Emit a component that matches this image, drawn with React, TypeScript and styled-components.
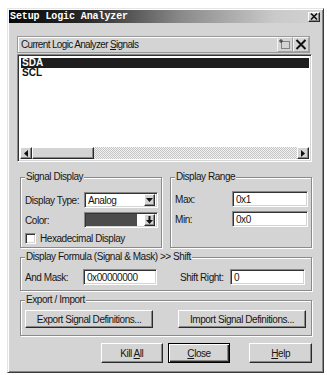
import styled, { createGlobalStyle, css } from 'styled-components';

const FACE = '#d4d4d4';
const UI_FONT = '"Liberation Sans", Arial, sans-serif';

const GlobalStyle = createGlobalStyle`
  html, body {
    margin: 0;
    padding: 0;
    background: #fff;
  }
  body {
    font-family: ${UI_FONT};
    font-size: 10px;
    letter-spacing: -0.45px;
    color: #161616;
  }
`;

const raised = css`
  background: ${FACE};
  border: 1px solid;
  border-color: #fff #2a2a2a #2a2a2a #fff;
  box-shadow: inset -1px -1px #888;
  box-sizing: border-box;
`;

const sunken = css`
  background: #fff;
  border: 1px solid;
  border-color: #888 #fff #fff #888;
  box-shadow: inset 1px 1px #333, inset -1px -1px ${FACE};
  box-sizing: border-box;
`;

const Page = styled.div`
  width: 327px;
  height: 375px;
  box-sizing: border-box;
  padding: 8px 0 0 7px;
`;

const Dialog = styled.div`
  width: 317px;
  height: 365px;
  box-sizing: border-box;
  padding: 1px;
  background: ${FACE};
  border: 1px solid;
  border-color: #e4e4e4 #3a3a3a #3a3a3a #e4e4e4;
  box-shadow: inset 1px 1px #fff, inset -1px -1px #888;
  display: flex;
  flex-direction: column;
`;

const TitleBar = styled.div`
  height: 13px;
  display: flex;
  align-items: center;
  justify-content: space-between;
  padding: 0 2px 0 1px;
  background: linear-gradient(90deg, #080808 0%, #2a2a2a 25%, #8a8a8a 55%, #cacaca 85%, #d2d2d2 100%);
`;

const Title = styled.span`
  font-family: "Liberation Mono", "DejaVu Sans Mono", monospace;
  font-weight: bold;
  font-size: 10px;
  color: #fff;
  letter-spacing: -0.1px;
`;

const CaptionButton = styled.span`
  ${raised};
  width: 12px;
  height: 10px;
  display: flex;
  align-items: center;
  justify-content: center;
`;

const Body = styled.div`
  flex: 1;
  display: flex;
  flex-direction: column;
  padding: 13px 10px 0 8px;
`;

const SignalsHeader = styled.div`
  height: 17px;
  margin-right: 2px;
  box-sizing: border-box;
  display: flex;
  align-items: center;
  padding-left: 3px;
  border: 1px solid #9a9a9a;
  box-shadow: inset 1px 1px #fff;
`;

const HeaderLabel = styled.span`
  flex: 1;
  letter-spacing: -0.65px;
`;

const ToolButton = styled.span`
  width: 16px;
  height: 15px;
  box-sizing: border-box;
  display: flex;
  align-items: center;
  justify-content: center;
  border: 1px solid;
  border-color: #f4f4f4 #a0a0a0 #a0a0a0 #f4f4f4;
`;

const Key = styled.span`
  text-decoration: underline;
`;

const SignalList = styled.div`
  ${sunken};
  margin-top: 1px;
  height: 108px;
  padding: 2px;
  display: flex;
  flex-direction: column;
`;

const Rows = styled.div`
  flex: 1;
  padding: 1px 0 0 1px;
`;

const Row = styled.div<{ $selected?: boolean }>`
  height: 10px;
  line-height: 10px;
  padding-left: 1px;
  font-weight: bold;
  font-size: 10px;
  letter-spacing: 0;
  background: ${(p) => (p.$selected ? '#1e1e1e' : 'transparent')};
  color: ${(p) => (p.$selected ? '#fff' : '#111')};
`;

const HScroll = styled.div`
  height: 12px;
  display: flex;
`;

const ArrowButton = styled.span`
  ${raised};
  width: 12px;
  height: 12px;
  display: flex;
  align-items: center;
  justify-content: center;
`;

const Thumb = styled.span`
  ${raised};
  width: 62px;
  height: 12px;
`;

const Track = styled.span`
  flex: 1;
  background-color: #fff;
  background-image: repeating-conic-gradient(#c4c4c4 0 25%, #f2f2f2 0 50%);
  background-size: 2px 2px;
`;

const GroupRow = styled.div`
  display: grid;
  grid-template-columns: 1fr 1fr;
  gap: 8px;
  margin: 9px 0 0 3px;
`;

const Group = styled.fieldset<{ $height: number; $top?: number }>`
  margin: ${(p) => p.$top ?? 0}px 0 0 0;
  padding: 0 3px 0 4px;
  min-width: 0;
  height: ${(p) => p.$height}px;
  box-sizing: border-box;
  border: 1px solid #8a8a8a;
  box-shadow: inset 1px 1px #fff, 1px 1px #fff;
`;

const WideGroup = styled(Group)`
  margin-left: 3px;
`;

const Legend = styled.legend`
  padding: 0 1px;
  line-height: 12px;
  background: ${FACE};
`;

const FieldGrid = styled.div<{ $cols: string; $rows: string; $top: number }>`
  display: grid;
  grid-template-columns: ${(p) => p.$cols};
  grid-template-rows: ${(p) => p.$rows};
  row-gap: 4px;
  align-items: center;
  margin-top: ${(p) => p.$top}px;
`;

const Label = styled.span`
  white-space: nowrap;
`;

const Field = styled.div`
  ${sunken};
  height: 16px;
  display: flex;
  align-items: center;
  padding: 0 2px 0 3px;
  white-space: nowrap;
`;

const ComboText = styled.span`
  flex: 1;
`;

const DropButton = styled.span`
  ${raised};
  width: 11px;
  height: 12px;
  display: flex;
  align-items: center;
  justify-content: center;
`;

const Swatch = styled.span`
  flex: 1;
  align-self: stretch;
  margin: 1px 7px 1px -2px;
  background: #4c4c4c;
`;

const CheckRow = styled.label`
  grid-column: 1 / -1;
  display: flex;
  align-items: center;
  gap: 4px;
`;

const CheckBox = styled.span`
  ${sunken};
  width: 11px;
  height: 11px;
`;

const ButtonPair = styled.div`
  display: flex;
  gap: 25px;
  margin-top: 4px;
`;

const PushButton = styled.button<{ $width: number; $height?: number; $default?: boolean; $gapBefore?: number }>`
  ${raised};
  width: ${(p) => p.$width}px;
  height: ${(p) => p.$height ?? 18}px;
  margin-left: ${(p) => p.$gapBefore ?? 0}px;
  padding: 0;
  white-space: nowrap;
  font-family: ${UI_FONT};
  font-size: 10px;
  letter-spacing: -0.45px;
  color: #161616;
  ${(p) =>
    p.$default &&
    css`
      border: 1px solid #000;
      box-shadow: inset 1px 1px #fff, inset -1px -1px #2a2a2a, inset -2px -2px #888;
    `}
`;

const ButtonBar = styled.div`
  display: flex;
  gap: 5px;
  margin-top: 7px;
  padding-left: 84px;
`;

const TriangleDown = () => (
  <svg width="7" height="4" viewBox="0 0 7 4">
    <path d="M0 0h7L3.5 4z" fill="#111" />
  </svg>
);

function App() {
  return (
    <Page>
      <GlobalStyle />
      <Dialog>
        <TitleBar>
          <Title>Setup Logic Analyzer</Title>
          <CaptionButton>
            <svg width="8" height="7" viewBox="0 0 8 7">
              <path d="M1 0.5l6 6M7 0.5l-6 6" stroke="#111" strokeWidth="1.6" />
            </svg>
          </CaptionButton>
        </TitleBar>

        <Body>
          <SignalsHeader>
            <HeaderLabel>
              Current Logic Analyzer <Key>S</Key>ignals
            </HeaderLabel>
            <ToolButton>
              <svg width="12" height="11" viewBox="0 0 12 11">
                <rect x="2.5" y="2.5" width="8" height="7" fill="none" stroke="#333" strokeDasharray="1 1" />
                <path d="M2 0v4M0 2h4" stroke="#333" strokeWidth="1" />
              </svg>
            </ToolButton>
            <ToolButton>
              <svg width="12" height="11" viewBox="0 0 12 11">
                <path d="M1.5 1l9 9M10.5 1l-9 9" stroke="#111" strokeWidth="2" />
              </svg>
            </ToolButton>
          </SignalsHeader>

          <SignalList>
            <Rows>
              <Row $selected>SDA</Row>
              <Row>SCL</Row>
            </Rows>
            <HScroll>
              <ArrowButton>
                <svg width="4" height="7" viewBox="0 0 4 7">
                  <path d="M4 0v7L0 3.5z" fill="#111" />
                </svg>
              </ArrowButton>
              <Thumb />
              <Track />
              <ArrowButton>
                <svg width="4" height="7" viewBox="0 0 4 7">
                  <path d="M0 0v7l4-3.5z" fill="#111" />
                </svg>
              </ArrowButton>
            </HScroll>
          </SignalList>

          <GroupRow>
            <Group $height={77}>
              <Legend>Signal Display</Legend>
              <FieldGrid $cols="59px 1fr" $rows="16px 16px 13px" $top={9}>
                <Label>Display Type:</Label>
                <Field>
                  <ComboText>Analog</ComboText>
                  <DropButton>
                    <TriangleDown />
                  </DropButton>
                </Field>
                <Label>Color:</Label>
                <Field>
                  <Swatch />
                  <DropButton>
                    <svg width="7" height="8" viewBox="0 0 7 8">
                      <path d="M2.5 0h2v4h2.5L3.5 8 0 4h2.5z" fill="#111" />
                    </svg>
                  </DropButton>
                </Field>
                <CheckRow>
                  <CheckBox />
                  Hexadecimal Display
                </CheckRow>
              </FieldGrid>
            </Group>

            <Group $height={77}>
              <Legend>Display Range</Legend>
              <FieldGrid $cols="57px 1fr" $rows="16px 16px" $top={8}>
                <Label>Max:</Label>
                <Field>0x1</Field>
                <Label>Min:</Label>
                <Field>0x0</Field>
              </FieldGrid>
            </Group>
          </GroupRow>

          <WideGroup $height={40} $top={3}>
            <Legend>Display Formula (Signal &amp; Mask) &gt;&gt; Shift</Legend>
            <FieldGrid $cols="58px 74px 23px 50px 75px" $rows="16px" $top={6}>
              <Label>And Mask:</Label>
              <Field>0x00000000</Field>
              <span />
              <Label>Shift Right:</Label>
              <Field>0</Field>
            </FieldGrid>
          </WideGroup>

          <WideGroup $height={42} $top={3}>
            <Legend>Export / Import</Legend>
            <ButtonPair>
              <PushButton $width={128}>Export Signal Definitions...</PushButton>
              <PushButton $width={128}>Import Signal Definitions...</PushButton>
            </ButtonPair>
          </WideGroup>

          <ButtonBar>
            <PushButton $width={62} $height={20}>
              Kill <Key>A</Key>ll
            </PushButton>
            <PushButton $width={63} $height={20} $default>
              <Key>C</Key>lose
            </PushButton>
            <PushButton $width={63} $height={20} $gapBefore={14}>
              <Key>H</Key>elp
            </PushButton>
          </ButtonBar>
        </Body>
      </Dialog>
    </Page>
  );
}

export default App;
